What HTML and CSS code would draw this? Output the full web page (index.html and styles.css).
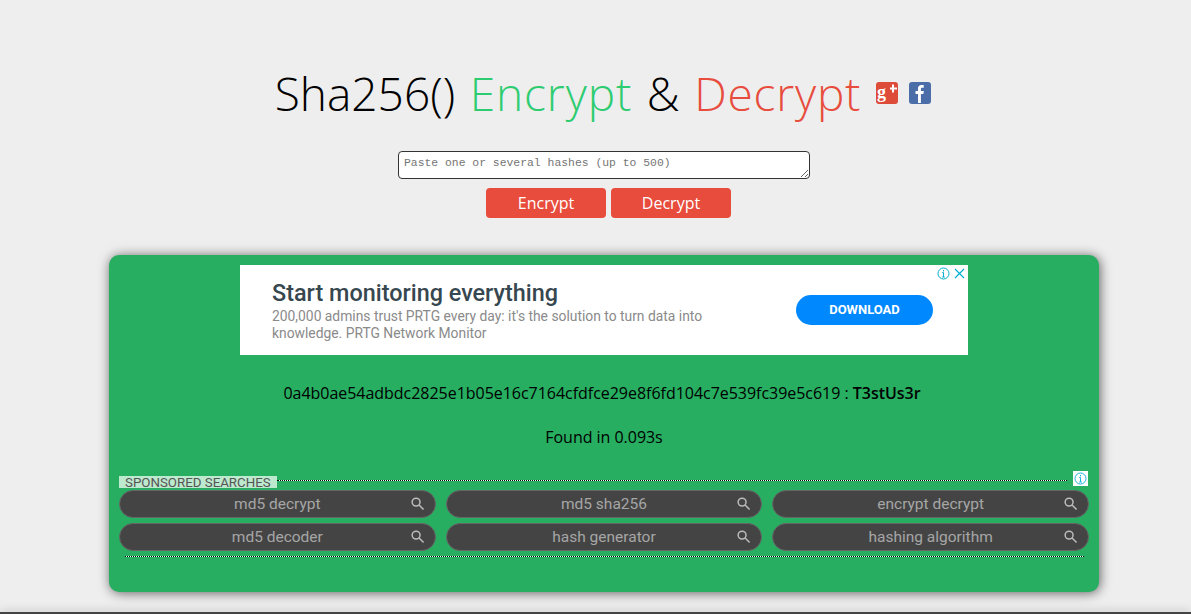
FILE: index.html
```html
<!DOCTYPE html>
<html lang="en">
<head>
  <meta charset="UTF-8" />
  <meta name="viewport" content="width=device-width, initial-scale=1.0"/>
  <title>Sha256() Encrypt &amp; Decrypt</title>
  <link rel="stylesheet" href="styles.css">
</head>
<body>
  <div class="header">
    <h1>
      <span>Sha256()</span>
      <span class="green">Encrypt</span>
      <span>&amp;</span>
      <span class="red">Decrypt</span>
    </h1>
    <div class="social">
      <svg width="22" height="22" viewBox="0 0 22 22" aria-label="Google Plus">
        <rect width="22" height="22" rx="3" fill="#dd4b39"/>
        <text x="1" y="16" class="gp-g">g</text>
        <path d="M14 5.5h2v-3h2v3h3v2h-3v3h-2v-3h-2z" fill="#fff"/>
      </svg>
      <svg width="22" height="22" viewBox="0 0 22 22" aria-label="Facebook">
        <rect width="22" height="22" rx="3" fill="#4b6ea9"/>
        <path d="M9 21v-9H6.5V9H9V6.6C9 4.2 10.4 3 12.6 3c1 0 1.8.1 2.1.1v2.7h-1.4c-1.1 0-1.4.5-1.4 1.3V9h2.9l-.4 3h-2.5v9z" fill="#fff"/>
      </svg>
    </div>
  </div>

  <form class="hash-form">
    <textarea placeholder="Paste one or several hashes (up to 500)"></textarea>
    <div class="buttons">
      <button type="button">Encrypt</button>
      <button type="button">Decrypt</button>
    </div>
  </form>

  <div class="card">
    <div class="ad">
      <div class="ad-text">
        <h3>Start monitoring everything</h3>
        <p>200,000 admins trust PRTG every day: it's the solution to turn data into knowledge. PRTG Network Monitor</p>
      </div>
      <a class="ad-button">DOWNLOAD</a>
      <div class="ad-icons">
        <svg width="13" height="13" viewBox="0 0 13 13">
          <circle cx="6.5" cy="6.5" r="5.5" fill="none" stroke="#00aecd" stroke-width="1"/>
          <path d="M6.5 3v1.4M6.5 5.5V10M5.2 5.6h1.3M5.2 10h2.6" fill="none" stroke="#00aecd" stroke-width="1"/>
        </svg>
        <svg width="13" height="13" viewBox="0 0 13 13">
          <path d="M2 2l9 9M11 2l-9 9" fill="none" stroke="#00aecd" stroke-width="1.2"/>
        </svg>
      </div>
    </div>

    <p class="result">0a4b0ae54adbdc2825e1b05e16c7164cfdfce29e8f6fd104c7e539fc39e5c619 : <b>T3stUs3r</b></p>
    <p class="found">Found in 0.093s</p>

    <div class="sponsored">
      <div class="sponsored-head">
        <span class="tag">SPONSORED SEARCHES</span>
        <span class="dots"></span>
        <span class="info">
          <svg width="13" height="13" viewBox="0 0 13 13">
            <circle cx="6.5" cy="6.5" r="5.5" fill="none" stroke="#1cb5e0" stroke-width="1"/>
            <path d="M6.5 3v1.4M6.5 5.5V10M5.2 5.6h1.3M5.2 10h2.6" fill="none" stroke="#1cb5e0" stroke-width="1"/>
          </svg>
        </span>
      </div>
      <div class="pills">
        <a class="pill">md5 decrypt<svg viewBox="0 0 16 16"><circle cx="6.5" cy="6.5" r="4.2"/><path d="M9.7 9.7L14.5 14.5"/></svg></a>
        <a class="pill">md5 sha256<svg viewBox="0 0 16 16"><circle cx="6.5" cy="6.5" r="4.2"/><path d="M9.7 9.7L14.5 14.5"/></svg></a>
        <a class="pill">encrypt decrypt<svg viewBox="0 0 16 16"><circle cx="6.5" cy="6.5" r="4.2"/><path d="M9.7 9.7L14.5 14.5"/></svg></a>
        <a class="pill">md5 decoder<svg viewBox="0 0 16 16"><circle cx="6.5" cy="6.5" r="4.2"/><path d="M9.7 9.7L14.5 14.5"/></svg></a>
        <a class="pill">hash generator<svg viewBox="0 0 16 16"><circle cx="6.5" cy="6.5" r="4.2"/><path d="M9.7 9.7L14.5 14.5"/></svg></a>
        <a class="pill">hashing algorithm<svg viewBox="0 0 16 16"><circle cx="6.5" cy="6.5" r="4.2"/><path d="M9.7 9.7L14.5 14.5"/></svg></a>
      </div>
      <div class="dots-bottom"></div>
    </div>
  </div>

  <div class="bottom-bar"></div>
</body>
</html>
```

FILE: styles.css
```css
* { box-sizing: border-box; margin: 0; padding: 0; }
html, body { height: 100%; }
body {
  background: #eee;
  color: #000;
  font-family: "Open Sans", sans-serif;
  display: flex;
  flex-direction: column;
  overflow: hidden;
}

.header {
  display: flex;
  justify-content: center;
  align-items: center;
  gap: 15px;
  height: 62px;
  margin-top: 62px;
  padding-left: 15px;
}

h1 {
  font-family: "Open Sans", sans-serif;
  font-weight: 300;
  font-size: 46px;
  line-height: 62px;
  white-space: nowrap;
  display: flex;
  gap: 14.6px;
}
.green { color: #2ecc71; letter-spacing: 0.9px; }
.red { color: #e74c3c; letter-spacing: 0.8px; }

.social { display: flex; gap: 11px; }
.social svg { display: block; }
.gp-g { font-family: "Liberation Serif", serif; font-weight: bold; font-size: 18px; fill: #fff; }

.hash-form {
  display: flex;
  flex-direction: column;
  align-items: center;
  margin-top: 27px;
  padding-left: 17px;
}

textarea {
  display: block;
  width: 412px;
  height: 28px;
  padding: 4px 5px 2px;
  border: 1px solid #333;
  border-radius: 4px;
  background: #fff;
  font-family: "Liberation Mono", monospace;
  font-size: 11.4px;
  line-height: 15px;
}
textarea::placeholder { color: #757575; }

.buttons {
  display: flex;
  gap: 5px;
  margin-top: 9px;
  margin-left: 9px;
}

button {
  width: 120px;
  height: 30px;
  background: #e74c3c;
  color: #fff;
  border: none;
  border-radius: 4px;
  font-family: "Open Sans", sans-serif;
  font-size: 16px;
  cursor: pointer;
}

.card {
  width: 990px;
  height: 337px;
  margin: 37px auto 0 109px;
  padding-top: 10px;
  background: #27ae60;
  border-radius: 10px;
  box-shadow: 1px 1px 12px rgba(0, 0, 0, 0.6);
}

.ad {
  position: relative;
  width: 728px;
  height: 90px;
  margin: 0 auto;
  padding: 0 35px 0 32px;
  background: #fff;
  display: flex;
  align-items: center;
  justify-content: space-between;
  font-family: Roboto, sans-serif;
}
.ad-text { width: 440px; }
.ad-text h3 {
  font-size: 23.4px;
  font-weight: 500;
  line-height: 30px;
  color: #37474f;
  white-space: nowrap;
}
.ad-text p {
  font-size: 13.85px;
  line-height: 17px;
  color: #8a8a8a;
}
.ad-button {
  width: 137px;
  height: 30px;
  border-radius: 15px;
  background: #0088ff;
  color: #fff;
  font-size: 13px;
  font-weight: 700;
  line-height: 30px;
  text-align: center;
}
.ad-icons {
  position: absolute;
  top: 2px;
  right: 2px;
  display: flex;
  gap: 3px;
}
.ad-icons svg { display: block; }

.result, .found {
  text-align: center;
  font-size: 16px;
  line-height: 22px;
  letter-spacing: -0.03px;
}
.result { margin-top: 27px; padding-right: 4px; }
.result b { font-weight: 600; }
.found { margin-top: 22px; }

.sponsored { margin: 23px 10px 0; }
.sponsored-head {
  display: flex;
  align-items: flex-start;
  height: 19px;
}
.tag {
  height: 12px;
  margin-top: 5px;
  padding: 0 6px;
  background: #bde9cf;
  color: #555;
  font-family: Roboto, sans-serif;
  font-size: 13.3px;
  line-height: 13px;
  white-space: nowrap;
}
.dots {
  flex: 1;
  height: 1px;
  margin-top: 9px;
  border-top: 1px dotted #000;
  background: #fff;
}
.info {
  width: 15px;
  height: 15px;
  margin-left: 6px;
  margin-right: 1px;
  background: #fff;
  padding: 1px;
}
.info svg { display: block; }

.pills {
  display: grid;
  grid-template-columns: repeat(3, 1fr);
  gap: 5px 10px;
}
.pill {
  position: relative;
  height: 28px;
  border-radius: 14px;
  background: #444;
  border: 1px solid #666;
  color: #a6a6a6;
  font-family: Roboto, sans-serif;
  font-size: 15.5px;
  line-height: 26px;
  text-align: center;
}
.pill svg {
  position: absolute;
  top: 5px;
  right: 10px;
  width: 15px;
  height: 15px;
  fill: none;
  stroke: #bbb;
  stroke-width: 1.6;
}

.dots-bottom {
  height: 1px;
  margin: 5px 5px 0 6px;
  border-top: 1px dotted #000;
  background: #fff;
}

.bottom-bar {
  height: 2px;
  margin-top: auto;
  background: #444;
  box-shadow: 0 0 10px rgba(0, 0, 0, 0.4);
}
```
